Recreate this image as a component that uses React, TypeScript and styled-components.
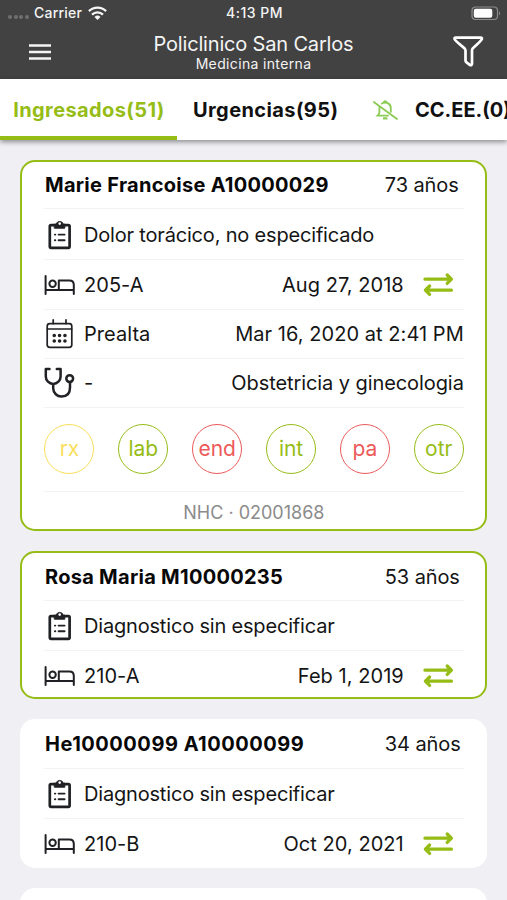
import React from "react";
import styled, { createGlobalStyle, css } from "styled-components";

const GREEN = "#96bc16";
const RED = "#ec5a5a";
const YELLOW = "#fade5a";

const GlobalStyle = createGlobalStyle`
  * { box-sizing: border-box; }
  body {
    margin: 0;
    background: #f0eff4;
    font-family: Inter, "Liberation Sans", sans-serif;
    color: #151515;
  }
`;

const Screen = styled.div`
  display: flex;
  flex-direction: column;
  width: 507px;
  height: 900px;
  overflow: hidden;
  background: #f0eff4;
`;

const Header = styled.header`
  flex: none;
  height: 79px;
  background: #424242;
  color: #f4f4f4;
`;

const StatusBar = styled.div`
  display: grid;
  grid-template-columns: 1fr auto 1fr;
  align-items: center;
  height: 26px;
  padding: 0 6px 0 8px;
  font-size: 14px;
  font-weight: 500;
  line-height: 26px;
`;

const Carrier = styled.div`
  display: flex;
  align-items: center;
  gap: 5.5px;
  letter-spacing: 0.22px;
`;

const Signal = styled.div`
  display: flex;
  gap: 1.5px;
  padding-top: 8px;
`;

const SignalDot = styled.span`
  width: 4px;
  height: 4px;
  border-radius: 50%;
  background: #707070;
`;

const Clock = styled.div`
  letter-spacing: 0.5px;
`;

const StatusEnd = styled.div`
  display: flex;
  justify-content: flex-end;
`;

const NavBar = styled.div`
  display: grid;
  grid-template-columns: 60px 1fr 60px;
  height: 53px;
  align-items: center;
`;

const NavButton = styled.button<{ $side: "left" | "right" }>`
  display: flex;
  justify-content: ${(p) => (p.$side === "left" ? "flex-end" : "flex-start")};
  align-items: center;
  height: 53px;
  padding: ${(p) => (p.$side === "left" ? "0 9px 2px 0" : "0 0 2px 6px")};
  border: 0;
  background: none;
`;

const Heading = styled.div`
  display: flex;
  flex-direction: column;
  align-items: center;
  padding-bottom: 1px;
`;

const Hospital = styled.div`
  font-size: 20px;
  line-height: 23px;
  letter-spacing: -0.17px;
`;

const Department = styled.div`
  font-size: 14px;
  line-height: 16px;
  letter-spacing: 0.35px;
`;

const Tabs = styled.nav`
  display: flex;
  flex: none;
  height: 61px;
  background: #fff;
  box-shadow: 0 2px 5px rgba(0, 0, 0, 0.42);
`;

const Tab = styled.div<{ $active?: boolean; $width: number; $tight?: boolean }>`
  display: flex;
  flex: none;
  align-items: center;
  justify-content: ${(p) => (p.$active ? "center" : "flex-start")};
  gap: 17px;
  width: ${(p) => p.$width}px;
  padding: ${(p) => (p.$active ? "4px 0 0 1px" : "4px 0 3px 16px")};
  border-bottom: ${(p) => (p.$active ? `4px solid ${GREEN}` : "0")};
  color: ${(p) => (p.$active ? GREEN : "#111")};
  font-size: 20px;
  font-weight: 700;
  white-space: nowrap;
  letter-spacing: ${(p) => (p.$tight ? 0 : 0.4)}px;
`;

const List = styled.main`
  display: flex;
  flex-direction: column;
  gap: 20px;
  padding: 20px 20px 0 20.4px;
`;

const Card = styled.article<{ $highlighted?: boolean }>`
  flex: none;
  width: 467px;
  padding: ${(p) => (p.$highlighted ? "0 21.6px" : "0 23.6px")};
  border: ${(p) => (p.$highlighted ? `2px solid ${GREEN}` : "0")};
  border-radius: 15px;
  background: #fff;
`;

const Row = styled.div<{ $height: number; $last?: boolean; $drop?: number }>`
  display: flex;
  align-items: center;
  height: ${(p) => p.$height}px;
  padding-top: ${(p) => p.$drop ?? 0}px;
  border-bottom: ${(p) => (p.$last ? "0" : "1px solid #f3f3f3")};
  font-size: 20px;
  line-height: 24px;
  white-space: nowrap;
`;

const Name = styled.h2<{ $tracking?: number }>`
  margin: 0 auto 0 1px;
  font-size: 20px;
  font-weight: 700;
  color: #080808;
  letter-spacing: ${(p) => p.$tracking ?? 0.28}px;
`;

const Age = styled.span`
  width: 79px;
  letter-spacing: -0.1px;
`;

const IconSlot = styled.span`
  display: flex;
  flex: none;
  width: 40px;
`;

const Label = styled.span<{ $tight?: boolean }>`
  margin-right: auto;
  letter-spacing: ${(p) => (p.$tight ? "-0.18px" : "0.05px")};
`;

const Value = styled.span<{ $tracking?: number }>`
  letter-spacing: ${(p) => p.$tracking ?? 0.05}px;
`;

const Transfer = styled.span`
  display: flex;
  margin: 0 10px 0 19px;
`;

const Badges = styled.div`
  display: flex;
  align-items: center;
  justify-content: space-between;
  height: 84px;
  padding: 0 0 1px 0.5px;
  border-bottom: 1px solid #f3f3f3;
`;

const Badge = styled.span<{ $color: string }>`
  width: 50px;
  height: 50px;
  border: 1.5px solid ${(p) => p.$color};
  border-radius: 50%;
  color: ${(p) => p.$color};
  font-size: 21px;
  line-height: 48px;
  text-align: center;
`;

const Record = styled.div`
  height: 37px;
  color: #8b8b8b;
  font-size: 18px;
  line-height: 41px;
  text-align: center;
`;

const iconInk = css`
  display: block;
  fill: none;
  stroke: #202124;
  stroke-linecap: round;
  stroke-linejoin: round;
`;

const Icon = styled.svg`
  ${iconInk}
`;

const WifiIcon = () => (
  <svg width="19" height="15" viewBox="0 0 19 15" fill="none" stroke="#f6f6f6" strokeWidth="2.3">
    <path d="M.9 5.1a12.4 12.4 0 0 1 17.2 0M4 8.6a8 8 0 0 1 11 0" />
    <path d="m9.5 14 3-3.1a4.4 4.4 0 0 0-6 0z" fill="#f6f6f6" stroke="none" />
  </svg>
);

const BatteryIcon = () => (
  <svg width="30" height="15" viewBox="0 0 30 15">
    <rect x="1" y="1" width="25.5" height="12.5" rx="3.5" fill="none" stroke="#8c8c8c" strokeWidth="1.2" />
    <rect x="2.8" y="2.8" width="18.5" height="9" rx="2" fill="#fff" />
    <path d="M28 5.2q2 2 0 4.2z" fill="#929292" />
  </svg>
);

const MenuIcon = () => (
  <svg width="22" height="16" viewBox="0 0 22 16" stroke="#f4f4f4" strokeWidth="2.5">
    <path d="M0 1.5h22M0 8h22M0 14.5h22" />
  </svg>
);

const FilterIcon = () => (
  <svg width="31" height="31" viewBox="0 0 31 31" fill="none" stroke="#fff" strokeWidth="2.7" strokeLinejoin="round">
    <path d="M2.6 1.6h25.2q1.4 0 1 1.6-.4 1.4-8.9 9.1-.9.9-.9 2.2v13q0 2.3-2.2 1.4l-3.3-2.5q-1-.7-1-1.8v-10q0-1.4-.9-2.2Q2 4.6 1.6 3.2q-.4-1.6 1-1.6z" />
  </svg>
);

const MutedBellIcon = () => (
  <svg width="26" height="21" viewBox="0 0 26 21" fill="none" stroke="#8ccb54" strokeWidth="1.8" strokeLinecap="round">
    <path d="M1.8 2 25 19M9.8 3.6A5.6 5.6 0 0 1 18.8 8.4v3.4M7.4 7.4v4.8q0 1.6-1.8 3.4H16" />
    <path d="M12.2 2.2q1-1.4 2 0M12 18.4h2.4" strokeWidth="2.4" />
  </svg>
);

const ClipboardIcon = () => (
  <Icon width="32" height="32" viewBox="0 0 32 32" strokeWidth="2.7">
    <rect x="5.8" y="6.2" width="19.8" height="22.6" rx="1.2" />
    <path d="M10.6 5.2h1.6a3.6 3.6 0 0 1 7 0h1.6v4H10.6z" fill="#202124" strokeWidth="1" />
    <circle cx="15.7" cy="4.6" r="1.3" fill="#fff" stroke="none" />
    <path d="M10.9 15.6h.4M14.6 15.6h6M10.9 21.2h.4M14.6 21.2h6" strokeWidth="1.9" />
  </Icon>
);

const BedIcon = () => (
  <Icon width="32" height="20" viewBox="0 0 32 20" strokeWidth="2" strokeLinecap="butt">
    <path d="M1.6 1v18M1.6 15h28.2M29.8 19v-9.2q0-4.4-4.4-4.4H14.8V15" />
    <circle cx="8.6" cy="8.8" r="3.2" />
  </Icon>
);

const CalendarIcon = () => (
  <Icon width="32" height="32" viewBox="0 0 32 32" strokeWidth="1.7">
    <rect x="3.2" y="5.6" width="24.6" height="23.8" rx="2.6" />
    <path d="M3.4 11h24.2M9.2 1.8v3.8M22 1.8v3.8" />
    <path d="M10.2 17.4h.1M15.5 17.4h.1M20.9 17.4h.1M10.2 22.9h.1M15.5 22.9h.1M20.9 22.9h.1" strokeWidth="3.5" />
  </Icon>
);

const StethoscopeIcon = () => (
  <Icon width="32" height="32" viewBox="0 0 32 32" strokeWidth="2.5">
    <path d="M5.5 2H1.8v7.5a7.4 7.4 0 0 0 14.8 0V2h-3.8M9.2 17v4.5a8.2 8.2 0 0 0 8.5 8q8.3 0 8.3-9v-5.3" />
    <circle cx="25.7" cy="11.6" r="3.4" />
  </Icon>
);

const TransferIcon = () => (
  <svg width="31" height="26" viewBox="0 0 31 26" fill="none" stroke={GREEN} strokeWidth="3.3" strokeLinecap="round" strokeLinejoin="round">
    <path d="M2 7.2h26M24.2 3l4.2 4.2-4.2 4.2M28.4 18.2H2.4M6.6 14l-4.2 4.2 4.2 4.2" />
  </svg>
);

type Study = { label: string; color: string };

type Patient = {
  name: string;
  tracking?: number;
  age: string;
  diagnosis: string;
  bed: string;
  date: string;
  highlighted?: boolean;
  discharge?: string;
  service?: string;
  studies?: Study[];
  record?: string;
};

const patients: Patient[] = [
  {
    name: "Marie Francoise A10000029",
    age: "73 años",
    diagnosis: "Dolor torácico, no especificado",
    bed: "205-A",
    date: "Aug 27, 2018",
    highlighted: true,
    discharge: "Mar 16, 2020 at 2:41 PM",
    service: "Obstetricia y ginecologia",
    studies: [
      { label: "rx", color: YELLOW },
      { label: "lab", color: GREEN },
      { label: "end", color: RED },
      { label: "int", color: GREEN },
      { label: "pa", color: RED },
      { label: "otr", color: GREEN },
    ],
    record: "NHC · 02001868",
  },
  {
    name: "Rosa Maria M10000235",
    age: "53 años",
    diagnosis: "Diagnostico sin especificar",
    bed: "210-A",
    date: "Feb 1, 2019",
    highlighted: true,
  },
  {
    name: "He10000099 A10000099",
    tracking: 0.52,
    age: "34 años",
    diagnosis: "Diagnostico sin especificar",
    bed: "210-B",
    date: "Oct 20, 2021",
  },
];

const NextCard = styled(Card)`
  height: 60px;
`;

function PatientCard({ patient: p }: { patient: Patient }) {
  const detailed = Boolean(p.studies);
  return (
    <Card $highlighted={p.highlighted}>
      <Row $height={p.highlighted ? (detailed ? 47 : 48) : 50}>
        <Name $tracking={p.tracking}>{p.name}</Name>
        <Age>{p.age}</Age>
      </Row>
      <Row $height={detailed ? 51 : 50} $drop={1}>
        <IconSlot><ClipboardIcon /></IconSlot>
        <Label $tight>{p.diagnosis}</Label>
      </Row>
      <Row $height={detailed ? 50 : p.highlighted ? 46 : 49} $last={!detailed} $drop={detailed ? 1 : p.highlighted ? 3 : 1}>
        <IconSlot><BedIcon /></IconSlot>
        <Label>{p.bed}</Label>
        <Value>{p.date}</Value>
        <Transfer><TransferIcon /></Transfer>
      </Row>
      {detailed && (
        <>
          <Row $height={49}>
            <IconSlot><CalendarIcon /></IconSlot>
            <Label>Prealta</Label>
            <Value>{p.discharge}</Value>
          </Row>
          <Row $height={49}>
            <IconSlot><StethoscopeIcon /></IconSlot>
            <Label>-</Label>
            <Value $tracking={-0.08}>{p.service}</Value>
          </Row>
          <Badges>
            {p.studies!.map((s) => (
              <Badge key={s.label} $color={s.color}>{s.label}</Badge>
            ))}
          </Badges>
          <Record>{p.record}</Record>
        </>
      )}
    </Card>
  );
}

export default function App() {
  return (
    <Screen>
      <GlobalStyle />
      <Header>
        <StatusBar>
          <Carrier>
            <Signal><SignalDot /><SignalDot /><SignalDot /><SignalDot /></Signal>
            Carrier
            <WifiIcon />
          </Carrier>
          <Clock>4:13 PM</Clock>
          <StatusEnd><BatteryIcon /></StatusEnd>
        </StatusBar>
        <NavBar>
          <NavButton $side="left" aria-label="Menu"><MenuIcon /></NavButton>
          <Heading>
            <Hospital>Policlinico San Carlos</Hospital>
            <Department>Medicina interna</Department>
          </Heading>
          <NavButton $side="right" aria-label="Filter"><FilterIcon /></NavButton>
        </NavBar>
      </Header>
      <Tabs>
        <Tab $active $width={177}>Ingresados(51)</Tab>
        <Tab $width={179}>Urgencias(95)</Tab>
        <Tab $width={200} $tight><MutedBellIcon />CC.EE.(0)</Tab>
      </Tabs>
      <List>
        {patients.map((p) => <PatientCard key={p.name} patient={p} />)}
        <NextCard />
      </List>
    </Screen>
  );
}
